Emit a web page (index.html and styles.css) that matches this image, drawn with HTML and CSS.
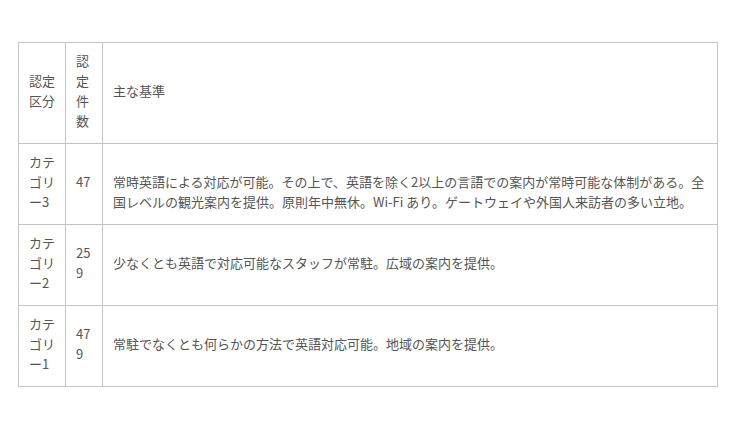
FILE: index.html
```html
<!DOCTYPE html>
<html lang="ja">
<head>
<meta charset="utf-8">
<link rel="stylesheet" href="styles.css">
</head>
<body>
<div class="wrap">
<table class="tbl">
  <colgroup>
    <col class="c1">
    <col class="c2">
    <col class="c3">
  </colgroup>
  <tr>
    <td>認定区分</td>
    <td class="num">認定件数</td>
    <td>主な基準</td>
  </tr>
  <tr>
    <td>カテゴリー3</td>
    <td class="num">47</td>
    <td class="low">常時英語による対応が可能。その上で、英語を除く2以上の言語での案内が常時可能な体制がある。全国レベルの観光案内を提供。原則年中無休。Wi-Fi あり。ゲートウェイや外国人来訪者の多い立地。</td>
  </tr>
  <tr>
    <td>カテゴリー2</td>
    <td class="num">259</td>
    <td>少なくとも英語で対応可能なスタッフが常駐。広域の案内を提供。</td>
  </tr>
  <tr>
    <td>カテゴリー1</td>
    <td class="num">479</td>
    <td>常駐でなくとも何らかの方法で英語対応可能。地域の案内を提供。</td>
  </tr>
</table>
</div>
</body>
</html>
```

FILE: styles.css
```css
html, body {
  margin: 0;
  padding: 0;
  background: #fff;
}
.wrap {
  padding: 42px 18px;
}
.tbl {
  width: 700px;
  table-layout: fixed;
  border-collapse: collapse;
  font-family: "Noto Sans CJK JP", "Noto Sans", sans-serif;
  font-size: 13px;
  line-height: 20px;
  color: #555;
}
.c1 { width: 47px; }
.c2 { width: 37px; }
.tbl td {
  border: 1px solid #c4c4c4;
  padding: 8px 10px 12px;
  vertical-align: middle;
  word-break: break-all;
}
.tbl td.low {
  padding-top: 28px;
}
```
